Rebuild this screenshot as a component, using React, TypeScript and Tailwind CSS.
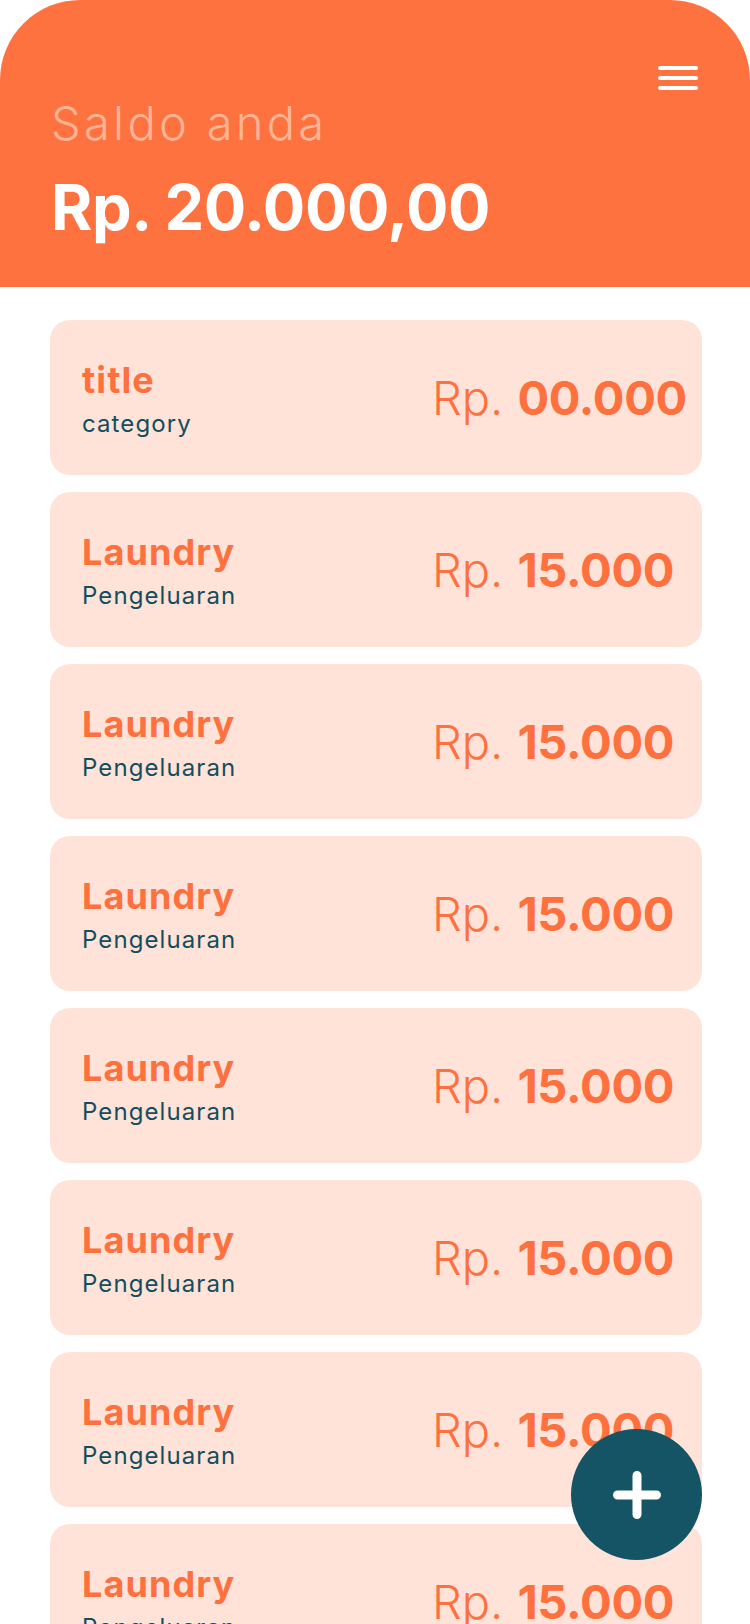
import React from "react";

const items = [
  { title: "title", category: "category", amount: "00.000" },
  ...Array.from({ length: 7 }, () => ({ title: "Laundry", category: "Pengeluaran", amount: "15.000" })),
];

export default function App() {
  return (
    <div className="min-h-screen bg-white font-['Inter','Liberation_Sans',sans-serif]">
      <header className="rounded-t-[80px] bg-[#fe723f] pl-[51px] pr-[52px] pt-[66px] pb-[44px]">
        <div className="flex justify-end">
          <button className="flex h-[24px] w-[40px] flex-col justify-between" aria-label="menu">
            <span className="block h-[4px] w-full rounded-full bg-white" />
            <span className="block h-[4px] w-full rounded-full bg-white" />
            <span className="block h-[4px] w-full rounded-full bg-white" />
          </button>
        </div>
        <div className="mt-[5px] text-[47px] font-light leading-[56px] tracking-[3.3px] text-[#ffb595]">Saldo anda</div>
        <div className="mt-[20px] text-[63px] font-bold leading-[72px] tracking-[-0.4px] text-white">Rp. 20.000,00</div>
      </header>

      <main className="flex flex-col gap-[17px] pl-[50px] pr-[48px] pt-[33px] pb-[40px]">
        {items.map((it, i) => (
          <div key={i} className="flex h-[155px] items-center rounded-[20px] bg-[#ffe3d9] pl-[32px]">
            <div className="w-[350px] shrink-0">
              <div className="text-[36px] font-bold leading-[44px] tracking-[1.1px] text-[#fe703d]">{it.title}</div>
              <div className="mt-[8px] text-[24px] font-normal leading-[28px] tracking-[1.1px] text-[#134e5e]">{it.category}</div>
            </div>
            <div className="whitespace-nowrap text-[47px] leading-[56px] text-[#fe703d]">
              <span className="font-light">Rp.</span>
              <span className="ml-[14px] font-bold tracking-[-0.3px]">{it.amount}</span>
            </div>
          </div>
        ))}
      </main>

      <button
        aria-label="add"
        className="fixed bottom-[64px] right-[48px] flex h-[131px] w-[131px] items-center justify-center rounded-full bg-[#155464]"
      >
        <svg width="48" height="48" viewBox="0 0 48 48" fill="none">
          <path d="M24 4.5v39M4.5 24h39" stroke="white" strokeWidth="9" strokeLinecap="round" />
        </svg>
      </button>
    </div>
  );
}
